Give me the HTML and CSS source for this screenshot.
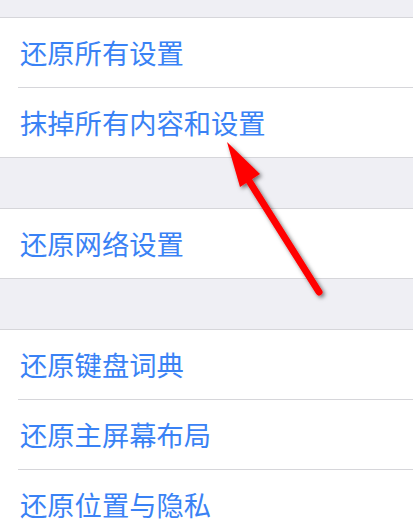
FILE: index.html
```html
<!DOCTYPE html>
<html lang="zh-CN">
<head>
<meta charset="utf-8">
<link rel="stylesheet" href="styles.css">
</head>
<body>
<div class="page">
  <div class="band band-top"></div>
  <div class="group">
    <div class="row">还原所有设置</div>
    <div class="row">抹掉所有内容和设置</div>
  </div>
  <div class="band"></div>
  <div class="group">
    <div class="row">还原网络设置</div>
  </div>
  <div class="band"></div>
  <div class="group">
    <div class="row">还原键盘词典</div>
    <div class="row">还原主屏幕布局</div>
    <div class="row">还原位置与隐私</div>
  </div>
  <svg class="arrow" width="413" height="528" viewBox="0 0 413 528">
    <defs>
      <filter id="sh" x="-20%" y="-20%" width="140%" height="140%">
        <feDropShadow dx="2" dy="2" stdDeviation="2" flood-color="#000" flood-opacity="0.55"/>
      </filter>
    </defs>
    <g filter="url(#sh)">
      <line x1="246" y1="176" x2="319" y2="292" stroke="#ff0000" stroke-width="7" stroke-linecap="round"/>
      <polygon points="227,142 240,187 260,174" fill="#ff0000"/>
    </g>
  </svg>
</div>
</body>
</html>
```

FILE: styles.css
```css
html, body {
  margin: 0;
  padding: 0;
  background: #efeff4;
}
.page {
  position: relative;
  width: 413px;
  height: 528px;
  overflow: hidden;
  background: #efeff4;
  font-family: "Noto Sans CJK SC", "Noto Sans", sans-serif;
}
.band {
  height: 50px;
}
.band-top {
  height: 17px;
}
.group {
  background: #ffffff;
  border-top: 1px solid #d6d6da;
  border-bottom: 1px solid #d6d6da;
  padding-left: 18px;
}
.row {
  height: 69px;
  display: flex;
  align-items: center;
  padding-left: 2px;
  font-size: 27.3px;
  color: #3a82f5;
  line-height: 1;
  letter-spacing: 0;
}
.row + .row {
  border-top: 1px solid #d6d6da;
}
.arrow {
  position: absolute;
  left: 0;
  top: 0;
  pointer-events: none;
}
```
